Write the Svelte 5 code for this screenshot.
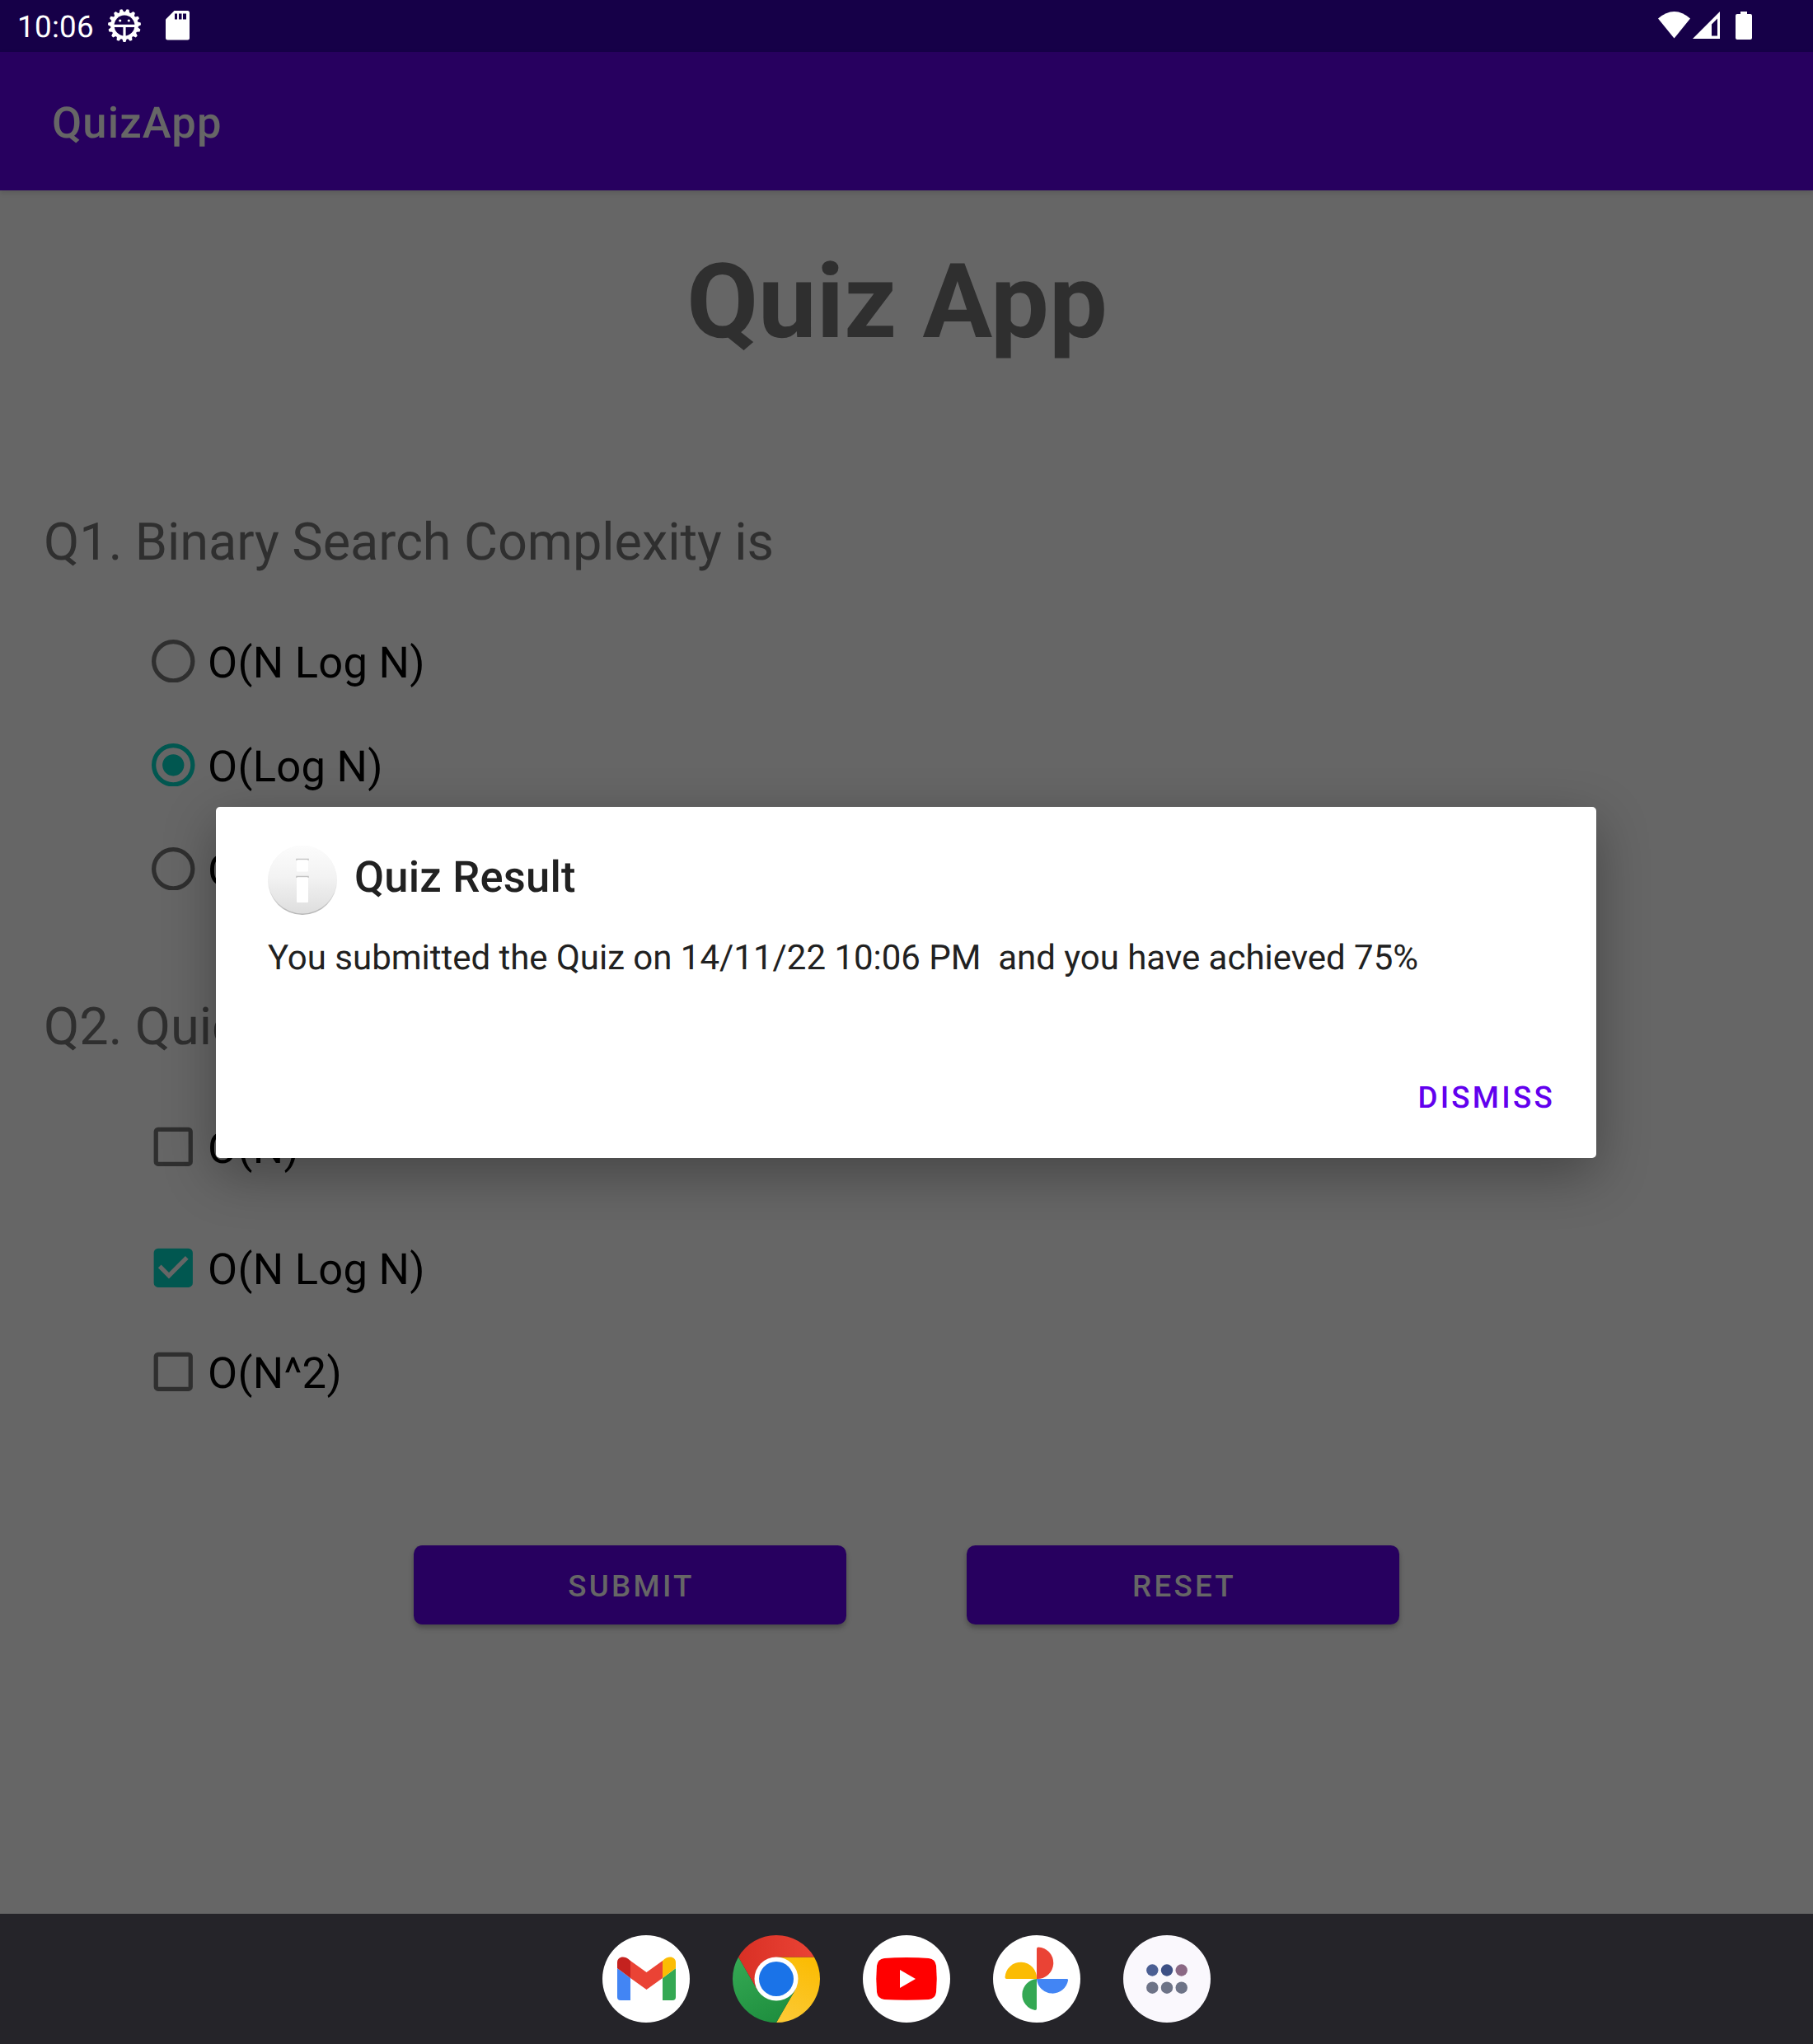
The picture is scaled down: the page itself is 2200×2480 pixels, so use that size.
<script>
  const q1 = [
    { label: 'O(N Log N)', checked: false },
    { label: 'O(Log N)', checked: true },
    { label: 'O(N)', checked: false }
  ];
  const q2 = [
    { label: 'O(N)', checked: false },
    { label: 'O(N Log N)', checked: true },
    { label: 'O(N^2)', checked: false }
  ];

  // Outline of the toothed ring in the status bar, pointing down.
  const teeth = 15;
  const gear = Array.from({ length: teeth }, (_, i) => {
    const at = (offset, r) => {
      const a = ((i + offset) / teeth) * Math.PI * 2 + Math.PI / 2;
      return `${(20 + r * Math.cos(a)).toFixed(2)},${(20 + r * Math.sin(a)).toFixed(2)}`;
    };
    return [at(-0.38, 16.8), at(-0.17, 20), at(0.17, 20), at(0.38, 16.8)].join(' ');
  }).join(' ');
</script>

<div class="screen">
  <div class="statusbar">
    <span class="time">10:06</span>
    <svg class="gear" viewBox="0 0 40 40">
      <polygon points={gear} fill="#fff" />
      <circle cx="20" cy="20" r="12.400" fill="#160048" />
      <path d="M7 20.300H33M20 20.300V34" stroke="#fff" stroke-width="3.200" />
      <circle cx="14.700" cy="14" r="1.600" fill="#fff" />
      <circle cx="25.300" cy="14" r="1.600" fill="#fff" />
    </svg>
    <svg class="sd" viewBox="0 0 29 36">
      <path d="M10.500 0H26.500Q29 0 29 2.500V33Q29 35.500 26.500 35.500H2.500Q0 35.500 0 33V10.500Z" fill="#fff" />
      <path d="M11 3.500h3v7h-3zM16 3.500h3.500v7H16zM21 3.500h4v7h-4z" fill="#160048" />
    </svg>
    <svg class="system" viewBox="0 0 115 34">
      <path d="M0 8.500Q19.500 -8.500 39 8.500L19.500 32.500Z" fill="#fff" />
      <path d="M42 33L75 0V33ZM65 15.500V29.500H72V8.500Z" fill="#fff" fill-rule="evenodd" />
      <path d="M100 0h8v3h4q2 0 2 2v27q0 2-2 2H96q-2 0-2-2V5q0-2 2-2h4z" fill="#fff" />
    </svg>
  </div>

  <header>QuizApp</header>

  <main>
    <h1>Quiz App</h1>

    <h2 class="first">Q1. Binary Search Complexity is</h2>
    <div class="options radios">
      {#each q1 as o}
        <div class="option">
          <svg viewBox="0 0 20 20" class:on={o.checked}>
            <circle cx="10" cy="10" r="9" fill="none" stroke="currentColor" stroke-width="2" />
            {#if o.checked}<circle cx="10" cy="10" r="5" fill="currentColor" />{/if}
          </svg>
          <span>{o.label}</span>
        </div>
      {/each}
    </div>

    <h2 class="second">Q2. Quick Sort Complexity is</h2>
    <div class="options checks">
      {#each q2 as o}
        <div class="option">
          <svg viewBox="0 0 20 20" class:on={o.checked}>
            {#if o.checked}
              <path
                fill="currentColor"
                fill-rule="evenodd"
                d="M17 1H3a2 2 0 0 0-2 2v14a2 2 0 0 0 2 2h14a2 2 0 0 0 2-2V3a2 2 0 0 0-2-2zM8 15L3 10l1.410-1.410L8 12.170l7.590-7.590L17 6z"
              />
            {:else}
              <rect x="2" y="2" width="16" height="16" rx="1" fill="none" stroke="currentColor" stroke-width="2" />
            {/if}
          </svg>
          <span>{o.label}</span>
        </div>
      {/each}
    </div>

    <div class="actions">
      <button>SUBMIT</button>
      <button>RESET</button>
    </div>
  </main>

  <nav>
    <svg viewBox="0 0 106 106">
      <circle cx="53" cy="53" r="53" fill="#fff" />
      <path d="M18 40L34 52V79H22Q18 79 18 75Z" fill="#4285f4" />
      <path d="M73 52L89 40V75Q89 79 85 79H73Z" fill="#34a853" />
      <path d="M34 31L53.500 45L73 31V52L53.500 66L34 52Z" fill="#ea4335" />
      <path d="M18 40V33C18 26 27 23.500 34 31V52Z" fill="#c5221f" />
      <path d="M89 40V33C89 26 80 23.500 73 31V52Z" fill="#fbbc04" />
    </svg>
    <svg viewBox="0 0 106 106">
      <defs>
        <linearGradient id="cr" x1="0" x2="1"><stop stop-color="#d93025" /><stop offset="1" stop-color="#ea4335" /></linearGradient>
        <linearGradient id="cg" x1="0.700" y1="1" x2="0.200" y2="0"><stop stop-color="#1e8e3e" /><stop offset="1" stop-color="#34a853" /></linearGradient>
        <linearGradient id="cy" x1="0.300" y1="1" x2="0.600" y2="0"><stop stop-color="#fcc934" /><stop offset="1" stop-color="#fbbc04" /></linearGradient>
      </defs>
      <path d="M98.900 26.500A53 53 0 0 1 53 106L76 66.250L53 26.500Z" fill="url(#cy)" />
      <path d="M53 106A53 53 0 0 1 7.100 26.500L30 66.250L76 66.250Z" fill="url(#cg)" />
      <path d="M7.100 26.500A53 53 0 0 1 98.900 26.500H53V53L30 66.250Z" fill="url(#cr)" />
      <circle cx="53" cy="53" r="26.500" fill="#fff" />
      <circle cx="53" cy="53" r="21" fill="#1a73e8" />
    </svg>
    <svg viewBox="0 0 106 106">
      <circle cx="53" cy="53" r="53" fill="#fff" />
      <path d="M53 27Q68 27 80 28Q88 29 89 37Q90.500 53 89 69Q88 77 80 78Q53 79.500 26 78Q18 77 17 69Q15.500 53 17 37Q18 29 26 28Q38 27 53 27Z" fill="#f00" />
      <path d="M45 42L64 53L45 64Z" fill="#fff" />
    </svg>
    <svg viewBox="0 0 106 106">
      <circle cx="53" cy="53" r="53" fill="#fff" />
      <path d="M53 53V16.500Q53 14.500 55 14.500A19.200 19.200 0 0 1 53 53Z" fill="#ea4335" />
      <path d="M53 53H89.500Q91.500 53 91 55A19.200 19.200 0 0 1 53 53Z" fill="#4285f4" />
      <path d="M53 53V89Q53 91 51 91A19.200 19.200 0 0 1 53 53Z" fill="#34a853" />
      <path d="M53 53H16.500Q14.500 53 14.500 51A19.200 19.200 0 0 1 53 53Z" fill="#fbbc04" />
    </svg>
    <svg viewBox="0 0 106 106">
      <circle cx="53" cy="53" r="53" fill="#faf8fd" />
      <circle cx="35.300" cy="42.500" r="7.200" fill="#4b5f93" />
      <circle cx="53" cy="42.500" r="7.200" fill="#3d5085" />
      <circle cx="70.700" cy="42.500" r="7.200" fill="#8b6985" />
      <circle cx="35.300" cy="63.700" r="7.200" fill="#6d7387" />
      <circle cx="53" cy="63.700" r="7.200" fill="#6d7387" />
      <circle cx="70.700" cy="63.700" r="7.200" fill="#6d7387" />
    </svg>
  </nav>

  <div class="dialog">
    <div class="heading">
      <svg viewBox="0 0 84 84">
        <defs>
          <linearGradient id="disc" x2="0" y2="1"><stop stop-color="#fcfcfc" /><stop offset="0.450" stop-color="#f3f3f3" /><stop offset="1" stop-color="#dedede" /></linearGradient>
          <linearGradient id="rim" x2="0" y2="1"><stop offset="0.500" stop-color="#f0f0f0" /><stop offset="1" stop-color="#b4b4b4" /></linearGradient>
        </defs>
        <circle cx="42" cy="42" r="42" fill="url(#rim)" />
        <circle cx="42" cy="41" r="41.500" fill="url(#disc)" />
        <path d="M35 18V16.500H49V18M35 39V37.500H49V39" fill="none" stroke="#c4c4c4" stroke-width="1.500" />
        <rect x="35" y="17.500" width="14" height="14" rx="1" fill="#fff" />
        <rect x="35" y="38.500" width="14" height="30.500" rx="1" fill="#fff" />
      </svg>
      <span>Quiz Result</span>
    </div>
    <p>You submitted the Quiz on 14/11/22 10:06 PM&nbsp; and you have achieved 75%</p>
    <div class="dismiss">DISMISS</div>
  </div>
</div>

<style>
  .screen {
    position: relative;
    width: 2200px;
    height: 2480px;
    display: flex;
    flex-direction: column;
    background: #666;
    font-family: Roboto, sans-serif;
    text-rendering: geometricPrecision;
    overflow: hidden;
  }
  svg { display: block; flex: none; }
  .statusbar {
    height: 63px;
    flex: none;
    box-sizing: border-box;
    display: flex;
    align-items: center;
    padding: 0 73px 1px 21px;
    background: #160048;
    color: #fff;
  }
  .time { font-size: 36.750px; line-height: 44px; padding-top: 4px; width: 110px; letter-spacing: 0.300px; }
  .gear { width: 40px; height: 40px; }
  .sd { width: 29px; height: 36px; margin-left: 30px; }
  .system { width: 115px; height: 34px; margin-left: auto; }
  header {
    height: 168px;
    flex: none;
    box-sizing: border-box;
    padding: 4px 0 0 63px;
    background: #27005f;
    color: #666;
    font-size: 52.500px;
    font-weight: 500;
    line-height: 164px;
    letter-spacing: 1.150px;
    box-shadow: 0 3px 6px rgba(0, 0, 0, 0.120);
  }
  main { flex: 1; display: flex; flex-direction: column; }
  h1 {
    margin: 61px 23px 0 0;
    text-align: center;
    font-size: 126px;
    line-height: 148px;
    font-weight: 700;
    color: #2f2f2f;
  }
  h2 {
    margin: 0 0 0 53px;
    font-size: 63px;
    line-height: 74px;
    font-weight: 400;
    letter-spacing: -0.060px;
    color: #2f2f2f;
  }
  .first { margin-top: 182px; }
  .second { margin-top: 93px; }
  .options { padding-left: 184px; }
  .radios { padding-top: 43px; }
  .checks { padding-top: 44px; }
  .option { height: 126px; display: flex; align-items: center; color: #000; font-size: 52.500px; line-height: 62px; letter-spacing: 0.280px; }
  .option svg { width: 52.500px; height: 52.500px; color: #2f2f2f; }
  .option svg.on { color: #015750; }
  .option span { padding: 4px 0 0 15.500px; }
  .checks .option:first-child { margin-bottom: 21px; }
  .actions { display: flex; gap: 146px; padding: 148px 0 0 502px; }
  button {
    width: 525px;
    height: 96px;
    border: 0;
    border-radius: 10.500px;
    padding: 3px 0 0 3px;
    background: #27005f;
    color: #666;
    font: 500 36.750px Roboto, sans-serif;
    letter-spacing: 0.089em;
    box-shadow: 0 4px 6px rgba(0, 0, 0, 0.280);
  }
  nav {
    height: 158px;
    flex: none;
    display: flex;
    align-items: center;
    justify-content: center;
    gap: 52px;
    background: #252429;
  }
  nav svg { width: 106px; height: 106px; }
  .dialog {
    position: absolute;
    left: 262px;
    top: 979px;
    width: 1675px;
    height: 426px;
    box-sizing: border-box;
    padding: 47px 50px 0 63px;
    border-radius: 5px;
    background: #fff;
    color: #212121;
    box-shadow: 0 20px 64px rgba(0, 0, 0, 0.320);
  }
  .heading { display: flex; gap: 21px; font-size: 52.500px; font-weight: 500; line-height: 76px; letter-spacing: 0.200px; }
  .heading svg { width: 84px; height: 84px; }
  p { margin: 28px 0 0; font-size: 42px; line-height: 50px; white-space: nowrap; letter-spacing: -0.020px; }
  .dismiss {
    margin-top: 122px;
    text-align: right;
    color: #6200ee;
    font-size: 36.750px;
    line-height: 44px;
    font-weight: 500;
    letter-spacing: 0.089em;
  }
</style>
